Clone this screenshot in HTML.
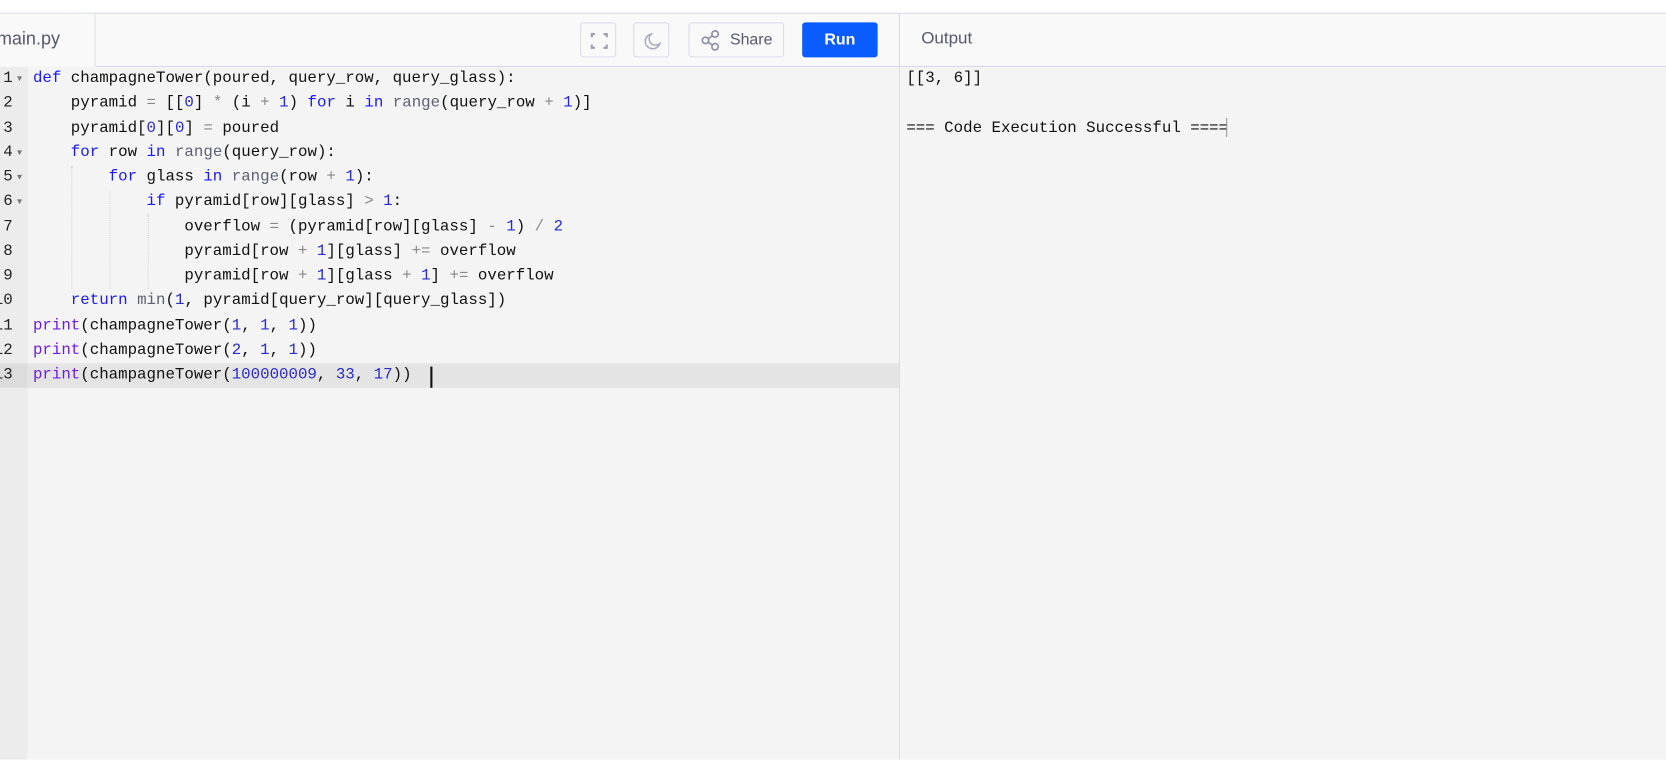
<!DOCTYPE html>
<html><head><meta charset="utf-8"><style>
*{margin:0;padding:0;box-sizing:border-box}
body{width:1666px;height:760px;background:#fff;position:relative;overflow:hidden;font-family:"Liberation Sans",sans-serif}
#w{position:absolute;left:0;top:0;width:1568px;height:715px;transform:scale(1.0625);transform-origin:0 0;overflow:hidden}
.top{position:absolute;top:12px;left:0;width:1568px;height:51px;background:#f9f9fa;border-top:1px solid #d7dce6;border-bottom:1px solid #d2d9e8}
.tab{position:absolute;top:13px;left:0;width:90px;height:50px;background:#f9f9fa;border-right:1px solid #dde2ea;color:#55596b;font-size:17px;line-height:48px;text-indent:-3px}
.btn{position:absolute;top:21px;height:33px;border:1px solid #d9dde6;border-radius:3px;background:#f9f9fa}
.run{position:absolute;left:755px;top:21px;width:71px;height:33px;background:#0b5cff;border-radius:3px;color:#fff;font-weight:bold;font-size:15px;text-align:center;line-height:33px}
.outl{position:absolute;left:867px;top:13px;line-height:48px;font-size:16px;color:#55596b}
.vsep{position:absolute;left:846px;top:13px;width:1px;height:702px;background:#d7dce6}
.ed{position:absolute;top:63px;left:0;width:846px;height:652px;background:#f4f4f4}
.gut{position:absolute;top:63px;left:0;width:26px;height:652px;background:#ececec}
.out{position:absolute;top:63px;left:847px;width:721px;height:652px;background:#f4f4f4}
.code{position:absolute;top:63px;left:0;font-family:"Liberation Mono",monospace;font-size:14.85px;color:#111}
.ln{height:23.25px;line-height:23.25px;position:relative;white-space:pre}
.n{position:absolute;left:-20px;width:32px;text-align:right;color:#222}
.f{position:absolute;left:16px;font-size:8px;color:#777}
.t{position:absolute;left:31px}
.k{color:#1a1aff}.b{color:#5c6273}.d{color:#2a2ad0}.o{color:#888}.p{color:#6b1ee0}
.hl{position:absolute;left:26px;top:342px;width:820px;height:23px;background:#e4e4e4}
.ghl{position:absolute;left:0;top:342px;width:26px;height:23px;background:#dcdcdc}
.guide{position:absolute;width:0;border-left:1px dotted #d6d6d6}
.o1{position:absolute;left:853px;font-family:"Liberation Mono",monospace;font-size:14.85px;color:#111;white-space:pre}
</style></head><body><div id="w">
<div class="top"></div>
<div class="tab">main.py</div>
<div class="btn" style="left:546px;width:34px"><svg width="34" height="33" viewBox="0 0 34 33"><path d="M10 13v-3h3M21 10h3v3M24 20v3h-3M13 23h-3v-3" fill="none" stroke="#9a9cb0" stroke-width="2"/></svg></div>
<div class="btn" style="left:596px;width:34px"><svg width="34" height="33" viewBox="0 0 34 33"><path d="M16 10a7 7 0 1 0 8 9a6 6 0 0 1-8-9z" fill="none" stroke="#a8aabb" stroke-width="1.4"/></svg></div>
<div class="btn" style="left:648px;width:90px"><svg width="30" height="33" viewBox="0 0 30 33" style="position:absolute;left:6px;top:0"><circle cx="9" cy="16" r="3" fill="none" stroke="#8a8da0" stroke-width="1.5"/><circle cx="18" cy="10" r="3" fill="none" stroke="#8a8da0" stroke-width="1.5"/><circle cx="18" cy="22" r="3" fill="none" stroke="#8a8da0" stroke-width="1.5"/><path d="M11.5 14.5l4-3M11.5 17.5l4 3" stroke="#8a8da0" stroke-width="1.5"/></svg><span style="position:absolute;left:38px;top:0;line-height:31px;font-size:15px;color:#55596b">Share</span></div>
<div class="run">Run</div>
<div class="outl">Output</div>
<div class="ed"></div><div class="gut"></div><div class="out"></div>
<div class="vsep"></div>
<div class="hl"></div><div class="ghl"></div>
<div class="guide" style="left:67px;top:156px;height:116px"></div>
<div class="guide" style="left:103px;top:179px;height:93px"></div>
<div class="guide" style="left:139px;top:202px;height:70px"></div>
<div class="code">
<div class="ln"><span class="n">1</span><span class="f">▼</span><span class="t"><span class="k">def</span> champagneTower(poured, query_row, query_glass):</span></div>
<div class="ln"><span class="n">2</span><span class="t">    pyramid <span class="o">=</span> [[<span class="d">0</span>] <span class="o">*</span> (i <span class="o">+</span> <span class="d">1</span>) <span class="k">for</span> i <span class="k">in</span> <span class="b">range</span>(query_row <span class="o">+</span> <span class="d">1</span>)]</span></div>
<div class="ln"><span class="n">3</span><span class="t">    pyramid[<span class="d">0</span>][<span class="d">0</span>] <span class="o">=</span> poured</span></div>
<div class="ln"><span class="n">4</span><span class="f">▼</span><span class="t">    <span class="k">for</span> row <span class="k">in</span> <span class="b">range</span>(query_row):</span></div>
<div class="ln"><span class="n">5</span><span class="f">▼</span><span class="t">        <span class="k">for</span> glass <span class="k">in</span> <span class="b">range</span>(row <span class="o">+</span> <span class="d">1</span>):</span></div>
<div class="ln"><span class="n">6</span><span class="f">▼</span><span class="t">            <span class="k">if</span> pyramid[row][glass] <span class="o">&gt;</span> <span class="d">1</span>:</span></div>
<div class="ln"><span class="n">7</span><span class="t">                overflow <span class="o">=</span> (pyramid[row][glass] <span class="o">-</span> <span class="d">1</span>) <span class="o">/</span> <span class="d">2</span></span></div>
<div class="ln"><span class="n">8</span><span class="t">                pyramid[row <span class="o">+</span> <span class="d">1</span>][glass] <span class="o">+=</span> overflow</span></div>
<div class="ln"><span class="n">9</span><span class="t">                pyramid[row <span class="o">+</span> <span class="d">1</span>][glass <span class="o">+</span> <span class="d">1</span>] <span class="o">+=</span> overflow</span></div>
<div class="ln"><span class="n">10</span><span class="t">    <span class="k">return</span> <span class="b">min</span>(<span class="d">1</span>, pyramid[query_row][query_glass])</span></div>
<div class="ln"><span class="n">11</span><span class="t"><span class="p">print</span>(champagneTower(<span class="d">1</span>, <span class="d">1</span>, <span class="d">1</span>))</span></div>
<div class="ln"><span class="n">12</span><span class="t"><span class="p">print</span>(champagneTower(<span class="d">2</span>, <span class="d">1</span>, <span class="d">1</span>))</span></div>
<div class="ln"><span class="n">13</span><span class="t"><span class="p">print</span>(champagneTower(<span class="d">100000009</span>, <span class="d">33</span>, <span class="d">17</span>))</span></div>
</div>
<div style="position:absolute;left:405px;top:345px;width:2px;height:20px;background:#111"></div>
<div class="o1" style="top:63px;line-height:23.25px">[[3, 6]]</div>
<div class="o1" style="top:109.5px;line-height:23.25px">=== Code Execution Successful ====</div>
<div style="position:absolute;left:1154px;top:111px;width:1px;height:18px;background:#999"></div>
</div></body></html>
